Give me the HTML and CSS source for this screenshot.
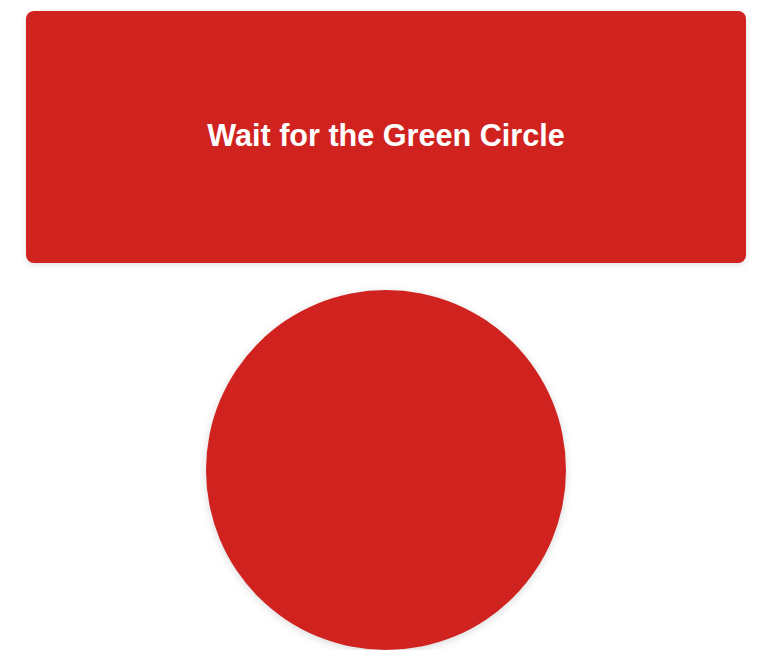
FILE: index.html
```html
<!DOCTYPE html>
<html>
<head>
<meta charset="utf-8">
<link rel="stylesheet" href="styles.css">
</head>
<body>
<div class="wrap">
  <div class="card"><h1 class="title">Wait for the Green Circle</h1></div>
  <div class="stage"><div class="circle"></div></div>
</div>
</body>
</html>
```
FILE: styles.css
```css
html, body { margin: 0; padding: 0; background: #fff; overflow: hidden; }
body { font-family: "Liberation Sans", Arial, sans-serif; }
.wrap { width: 720px; margin: 11px 0 0 26px; display: flex; flex-direction: column; gap: 27px; }
.card {
  height: 252px;
  background: #d02320;
  border-radius: 8px;
  box-shadow: 0 2px 6px rgba(0,0,0,0.12);
  display: flex; align-items: center; justify-content: center;
}
.title { margin: 0 0 4px; color: #fff; font-size: 30.6px; font-weight: bold; }
.stage { display: flex; justify-content: center; }
.circle {
  width: 360px; height: 360px; border-radius: 50%;
  background: #d02320;
  box-shadow: 0 2px 8px rgba(0,0,0,0.15);
}
```
